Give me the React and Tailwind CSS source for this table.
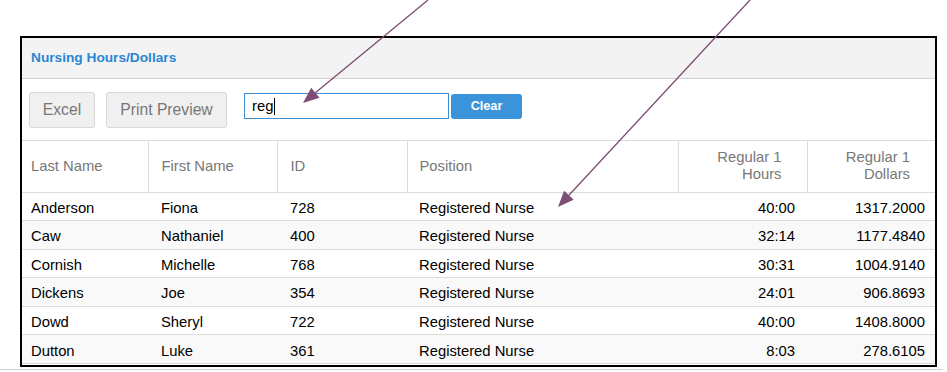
import React from "react";

const rows = [
  ["Anderson", "Fiona", "728", "Registered Nurse", "40:00", "1317.2000"],
  ["Caw", "Nathaniel", "400", "Registered Nurse", "32:14", "1177.4840"],
  ["Cornish", "Michelle", "768", "Registered Nurse", "30:31", "1004.9140"],
  ["Dickens", "Joe", "354", "Registered Nurse", "24:01", "906.8693"],
  ["Dowd", "Sheryl", "722", "Registered Nurse", "40:00", "1408.8000"],
  ["Dutton", "Luke", "361", "Registered Nurse", "8:03", "278.6105"],
];

// annotation arrow: line from (x1,y1) to tip (x2,y2) with a filled head
const Arrow = ({ x1, y1, x2, y2 }) => {
  const dx = x2 - x1;
  const dy = y2 - y1;
  const len = Math.sqrt(dx * dx + dy * dy);
  const ux = dx / len;
  const uy = dy / len;
  const bx = x2 - ux * 16;
  const by = y2 - uy * 16;
  const px = -uy * 6.5;
  const py = ux * 6.5;
  const head = `${x2},${y2} ${bx + px},${by + py} ${bx - px},${by - py}`;
  return (
    <g>
      <line x1={x1} y1={y1} x2={bx} y2={by} stroke="#7d4d74" strokeWidth="1.3" />
      <polygon points={head} fill="#7d4d74" />
    </g>
  );
};

const App = () => {
  return (
    <div
      className="relative w-[947px] h-[372px] bg-white overflow-hidden pt-[36px] pl-[20px]"
      style={{ fontFamily: '"Liberation Sans", Arial, sans-serif' }}
    >
      <div className="w-[917px] h-[331px] border-2 border-black flex flex-col overflow-hidden">
        <div className="h-[41px] shrink-0 bg-[#f3f3f3] border-b border-[#cfcfcf] flex items-center pl-[9px]">
          <p className="text-[13.7px] font-bold text-[#2b86d4]">Nursing Hours/Dollars</p>
        </div>

        <div className="h-[62px] shrink-0 border-b border-[#dcdcdc] flex items-start pt-[13px] pl-[7px]">
          <button className="w-[66px] h-[36px] bg-[#f0f0f0] border border-[#d8d8d8] rounded-[3px] text-[15.7px] text-[#777]">
            Excel
          </button>
          <button className="ml-[11px] w-[121px] h-[36px] bg-[#f0f0f0] border border-[#d8d8d8] rounded-[3px] text-[15.7px] text-[#777]">
            Print Preview
          </button>
          <div className="ml-[17px] mt-[1px] w-[205px] h-[26px] border border-[#3d8fd1] flex items-center pl-[7px] text-[14.8px] text-black">
            reg
            <span className="inline-block w-[1px] h-[17px] bg-black ml-[1px]"></span>
          </div>
          <button className="ml-[2px] mt-[2px] w-[71px] h-[25px] bg-[#3b94d9] rounded-[3px] text-[12.7px] font-bold text-white">
            Clear
          </button>
        </div>

        <table className="table-fixed border-collapse w-[913px] text-[14.8px]">
          <colgroup>
            <col className="w-[126px]" />
            <col className="w-[129px]" />
            <col className="w-[130px]" />
            <col className="w-[271px]" />
            <col className="w-[129px]" />
            <col className="w-[128px]" />
          </colgroup>
          <thead>
            <tr className="h-[51px] border-b border-[#dcdcdc] text-[#777] font-normal">
              <th className="font-normal text-left pl-[9px] border-r border-[#dcdcdc]">Last Name</th>
              <th className="font-normal text-left pl-[13px] border-r border-[#dcdcdc]">First Name</th>
              <th className="font-normal text-left pl-[13px] border-r border-[#dcdcdc]">ID</th>
              <th className="font-normal text-left pl-[12px] border-r border-[#dcdcdc]">Position</th>
              <th className="font-normal text-right pr-[25px] leading-[17px] border-r border-[#dcdcdc]">
                Regular 1<br />Hours
              </th>
              <th className="font-normal text-right pr-[25px] leading-[17px]">
                Regular 1<br />Dollars
              </th>
            </tr>
          </thead>
          <tbody className="text-black">
            {rows.map((r, i) => (
              <tr
                key={r[0]}
                className={`h-[28.6px] border-b border-[#dcdcdc] ${i % 2 === 1 ? "bg-[#f9f9f9]" : "bg-white"}`}
              >
                <td className="pl-[9px] pt-[3px]">{r[0]}</td>
                <td className="pl-[13px] pt-[3px]">{r[1]}</td>
                <td className="pl-[13px] pt-[3px]">{r[2]}</td>
                <td className="pl-[12px] pt-[3px]">{r[3]}</td>
                <td className="text-right pr-[12px] pt-[3px]">{r[4]}</td>
                <td className="text-right pr-[10px] pt-[3px]">{r[5]}</td>
              </tr>
            ))}
          </tbody>
        </table>
      </div>
      <div className="absolute left-0 top-[369px] w-[943px] h-[1px] bg-[#cfcfcf]"></div>

      <svg className="absolute inset-0 pointer-events-none" width="947" height="372">
        <Arrow x1={428} y1={0} x2={303} y2={103} />
        <Arrow x1={750} y1={0} x2={558} y2={207} />
      </svg>
    </div>
  );
};

export default App;
